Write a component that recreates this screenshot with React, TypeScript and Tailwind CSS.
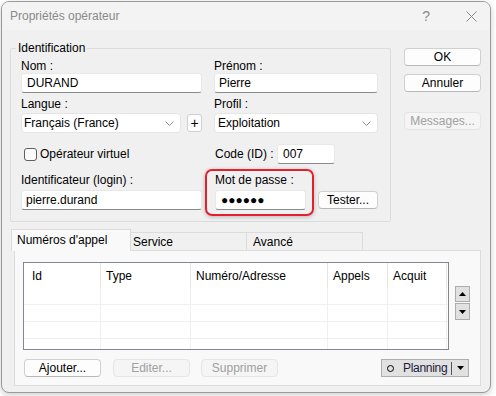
import { JSX } from "react";

const font = { fontFamily: '"Liberation Sans", Arial, sans-serif' };

const Chevron = (): JSX.Element => (
    <svg width="9" height="5" viewBox="0 0 9 5" className="ml-auto mr-[6px]">
        <path d="M0.5 0.5 L4.5 4.5 L8.5 0.5" fill="none" stroke="#8a8a8a" strokeWidth="1" />
    </svg>
);

const Tri = ({ up }: { up?: boolean }): JSX.Element => (
    <svg width="7" height="4" viewBox="0 0 7 4">
        <path d={up ? "M0 4 L3.5 0 L7 4 Z" : "M0 0 L7 0 L3.5 4 Z"} fill="#000" />
    </svg>
);

const Btn = ({ label, disabled, w = "w-[77px]" }: { label: string; disabled?: boolean; w?: string }): JSX.Element => (
    <div
        className={
            disabled
                ? `${w} h-[18px] flex items-center justify-center rounded-[4px] border border-[#e5e5e5] bg-[#f5f5f5] text-[#a0a0a0]`
                : `${w} h-[18px] flex items-center justify-center rounded-[4px] border border-[#d0d0d0] border-b-[#b8b8b8] bg-[#fdfdfd] text-black`
        }
    >
        {label}
    </div>
);

const Input = ({ value, w, pl = "pl-[5px]" }: { value: string; w: string; pl?: string }): JSX.Element => (
    <div
        className={`${w} h-[20px] ${pl} flex items-center bg-white rounded-[3px] border border-[#e8e8e8] border-b-[#8a8a8a] text-black`}
    >
        {value}
    </div>
);

const columns = [
    { name: "Id", w: "w-[77px]", pl: "pl-[8px]" },
    { name: "Type", w: "w-[90px]", pl: "pl-[5px]" },
    { name: "Numéro/Adresse", w: "w-[137px]", pl: "pl-[5px]" },
    { name: "Appels", w: "w-[60px]", pl: "pl-[5px]" },
    { name: "Acquit", w: "w-[59px]", pl: "pl-[5px]" },
];

const App = (): JSX.Element => {
    return (
        <div className="w-[496px] h-[396px] bg-white pt-[1px] pl-[1px] text-[12px] leading-[14px]" style={font}>
            <div className="w-[490px] h-[392px] rounded-[8px] border border-[#9a9a9a] bg-[#f0f0f0] overflow-hidden flex flex-col shadow-[0_2px_6px_rgba(0,0,0,0.2)]">
                {/* title bar */}
                <div className="h-[28px] shrink-0 flex items-center pl-[8px] pr-[13px] bg-[#f3f3f3] text-[#8a8a8a]">
                    <span>Propriétés opérateur</span>
                    <span className="ml-auto text-[14px] font-light text-[#8a8a8a]">?</span>
                    <svg width="11" height="11" viewBox="0 0 11 11" className="ml-[36px]">
                        <path d="M0.5 0.5 L10.5 10.5 M10.5 0.5 L0.5 10.5" stroke="#8a8a8a" strokeWidth="1" />
                    </svg>
                </div>

                {/* top section */}
                <div className="flex items-start pl-[8px] mt-[11px]">
                    <fieldset className="w-[381px] border border-[#dcdcdc] rounded-[2px] px-[10px] pt-[4px] pb-[5px]">
                        <legend className="-ml-[5px] px-[2px] leading-[14px] text-black">Identification</legend>

                        {/* row 1 */}
                        <div className="flex gap-[12px]">
                            <div className="w-[181px] flex flex-col">
                                <span className="h-[14px]">Nom :</span>
                                <Input value="DURAND" w="w-[181px]" />
                            </div>
                            <div className="w-[164px] flex flex-col">
                                <span className="h-[14px]">Prénom :</span>
                                <Input value="Pierre" w="w-[164px]" pl="pl-[4px]" />
                            </div>
                        </div>

                        {/* row 2 */}
                        <div className="flex gap-[12px] mt-[4px]">
                            <div className="w-[181px] flex flex-col">
                                <span className="h-[14px]">Langue :</span>
                                <div className="flex items-center mt-[2px]">
                                    <div className="w-[160px] h-[20px] pl-[2px] flex items-center bg-white rounded-[4px] border border-[#e5e5e5]">
                                        <span>Français (France)</span>
                                        <Chevron />
                                    </div>
                                    <div className="ml-[6px] w-[15px] h-[18px] flex items-center justify-center rounded-[3px] border border-[#d0d0d0] bg-[#fdfdfd] text-[14px]">
                                        +
                                    </div>
                                </div>
                            </div>
                            <div className="w-[164px] flex flex-col">
                                <span className="h-[14px]">Profil :</span>
                                <div className="mt-[2px] w-[164px] h-[20px] pl-[3px] flex items-center bg-white rounded-[4px] border border-[#e5e5e5]">
                                    <span>Exploitation</span>
                                    <Chevron />
                                </div>
                            </div>
                        </div>

                        {/* row 3 */}
                        <div className="flex gap-[12px] mt-[11px] h-[20px] items-center">
                            <div className="w-[181px] flex items-center">
                                <div className="ml-[3px] w-[13px] h-[13px] rounded-[3px] border border-[#5f5f5f] bg-[#fbfbfb]" />
                                <span className="ml-[3px]">Opérateur virtuel</span>
                            </div>
                            <div className="w-[164px] flex items-center">
                                <span className="ml-[1px] w-[62px]">Code (ID) :</span>
                                <Input value="007" w="w-[58px]" />
                            </div>
                        </div>

                        {/* row 4 */}
                        <div className="flex gap-[12px] mt-[9px] items-start">
                            <div className="w-[181px] flex flex-col">
                                <span className="h-[14px]">Identificateur (login) :</span>
                                <div className="mt-[3px]">
                                    <Input value="pierre.durand" w="w-[181px]" pl="pl-[4px]" />
                                </div>
                            </div>
                            <div className="w-[164px] flex items-start">
                                <div className="-ml-[9px] -mt-[4px] border-2 border-[#e5202e] rounded-[7px] pt-[2px] pl-[8px] pr-[6px] pb-[4px] shadow-[0_1px_4px_rgba(0,0,0,0.25)] flex flex-col">
                                    <span className="h-[14px]">Mot de passe :</span>
                                    <div className="mt-[3px]">
                                        <Input value="●●●●●●" w="w-[91px]" pl="pl-[5px]" />
                                    </div>
                                </div>
                                <div className="ml-[4px] mt-[18px]">
                                    <Btn label="Tester..." w="w-[60px]" />
                                </div>
                            </div>
                        </div>
                    </fieldset>

                    <div className="ml-[13px] mt-[7px] flex flex-col">
                        <Btn label="OK" />
                        <div className="mt-[8px]">
                            <Btn label="Annuler" />
                        </div>
                        <div className="mt-[20px]">
                            <Btn label="Messages..." disabled />
                        </div>
                    </div>
                </div>

                {/* tabs */}
                <div className="mt-[7px] ml-[9px] flex items-end h-[22px] -mb-[1px] relative z-10">
                    <div className="w-[120px] h-[22px] pl-[5px] pt-[3px] bg-[#f9f9f9] border-x border-t border-[#dcdcdc]">
                        Numéros d'appel
                    </div>
                    <div className="w-[116px] h-[18px] mb-[1px] pl-[2px] flex items-center bg-[#f0f0f0] border-t border-r border-[#dcdcdc]">
                        Service
                    </div>
                    <div className="w-[116px] h-[18px] mb-[1px] pl-[6px] flex items-center bg-[#f0f0f0] border-t border-r border-[#dcdcdc]">
                        Avancé
                    </div>
                </div>
                <div className="ml-[12px] w-[467px] h-[136px] bg-[#f9f9f9] border border-[#dcdcdc] pl-[8px] pt-[11px]">
                    <div className="flex items-start">
                        <div className="w-[426px] h-[88px] bg-white border border-[#828790] overflow-hidden">
                            <div className="flex h-[25px]">
                                {columns.map((c) => (
                                    <div key={c.name} className={`${c.w} ${c.pl} flex items-center border-r border-[#e5e5e5]`}>
                                        {c.name}
                                    </div>
                                ))}
                            </div>
                            {[0, 1, 2, 3].map((r) => (
                                <div key={r} className="flex h-[17px] border-b border-[#f0f0f0]">
                                    {columns.map((c) => (
                                        <div key={c.name} className={`${c.w} border-r border-[#f0f0f0]`} />
                                    ))}
                                </div>
                            ))}
                        </div>
                        <div className="ml-[6px] mt-[24px] flex flex-col">
                            <div className="w-[15px] h-[16px] flex items-center justify-center bg-[#e1e1e1] border border-[#adadad]">
                                <Tri up />
                            </div>
                            <div className="mt-[1px] w-[15px] h-[17px] flex items-center justify-center bg-[#e1e1e1] border border-[#adadad]">
                                <Tri />
                            </div>
                        </div>
                    </div>

                    <div className="flex items-center mt-[9px]">
                        <div className="ml-[1px]">
                            <Btn label="Ajouter..." />
                        </div>
                        <div className="ml-[12px]">
                            <Btn label="Editer..." disabled />
                        </div>
                        <div className="ml-[11px]">
                            <Btn label="Supprimer" disabled />
                        </div>
                        <div className="ml-[103px] w-[88px] h-[18px] flex items-center bg-[#e1e1e1] border border-[#adadad]">
                            <span className="ml-[5px] w-[7px] h-[7px] rounded-full border border-black" />
                            <span className="ml-[9px] tracking-[-0.3px] text-[#1a1a3a]">Planning</span>
                            <span className="ml-auto w-[1px] h-[13px] bg-[#555]" />
                            <span className="w-[16px] flex justify-center">
                                <Tri />
                            </span>
                        </div>
                    </div>
                </div>
            </div>
        </div>
    );
};

export default App;
